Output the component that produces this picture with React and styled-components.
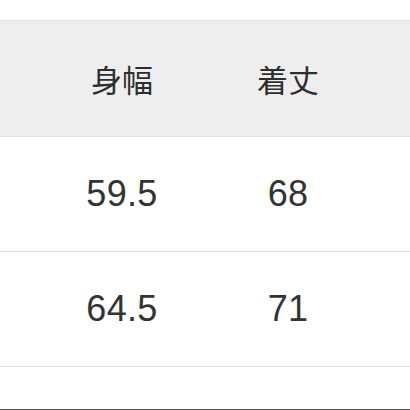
import React from "react";
import styled, { createGlobalStyle } from "styled-components";

const Global = createGlobalStyle`
  html, body { margin: 0; padding: 0; background: #ffffff; }
  body { width: 410px; height: 410px; overflow: hidden; position: relative; }
`;

const Page = styled.div`
  width: 410px;
  height: 410px;
  padding-top: 20px;
  box-sizing: border-box;
  display: flex;
  flex-direction: column;
  border-bottom: 1px solid #555555;
  font-family: "Liberation Sans", Arial, "Noto Sans CJK JP", sans-serif;
  color: #333333;
`;

const Row = styled.div`
  display: grid;
  grid-template-columns: 166px 166px;
  padding-left: 39px;
  height: ${(p) => (p.$head ? "115px" : "114px")};
  flex-shrink: 0;
  border-top: 1px solid #e2e2e2;
  background: ${(p) => (p.$head ? "#eeeeee" : "#ffffff")};
  &:last-child { border-bottom: 1px solid #e2e2e2; }
`;

const Cell = styled.div`
  display: flex;
  align-items: center;
  justify-content: center;
  font-size: ${(p) => (p.$head ? "31px" : "36px")};
  font-family: ${(p) =>
    p.$head
      ? '"Noto Sans CJK JP", "Noto Sans", sans-serif'
      : '"Liberation Sans", Arial, sans-serif'};
  letter-spacing: ${(p) => (p.$head ? "0px" : "0.3px")};
  color: ${(p) => (p.$head ? "#2e2e2e" : "#333333")};
`;

const rows = [
  ["59.5", "68"],
  ["64.5", "71"],
];

export default function App() {
  return (
    <>
      <Global />
      <Page>
        <Row $head>
          <Cell $head>身幅</Cell>
          <Cell $head>着丈</Cell>
        </Row>
        {rows.map((r, i) => (
          <Row key={i}>
            {r.map((c, j) => (
              <Cell key={j}>{c}</Cell>
            ))}
          </Row>
        ))}
      </Page>
    </>
  );
}
